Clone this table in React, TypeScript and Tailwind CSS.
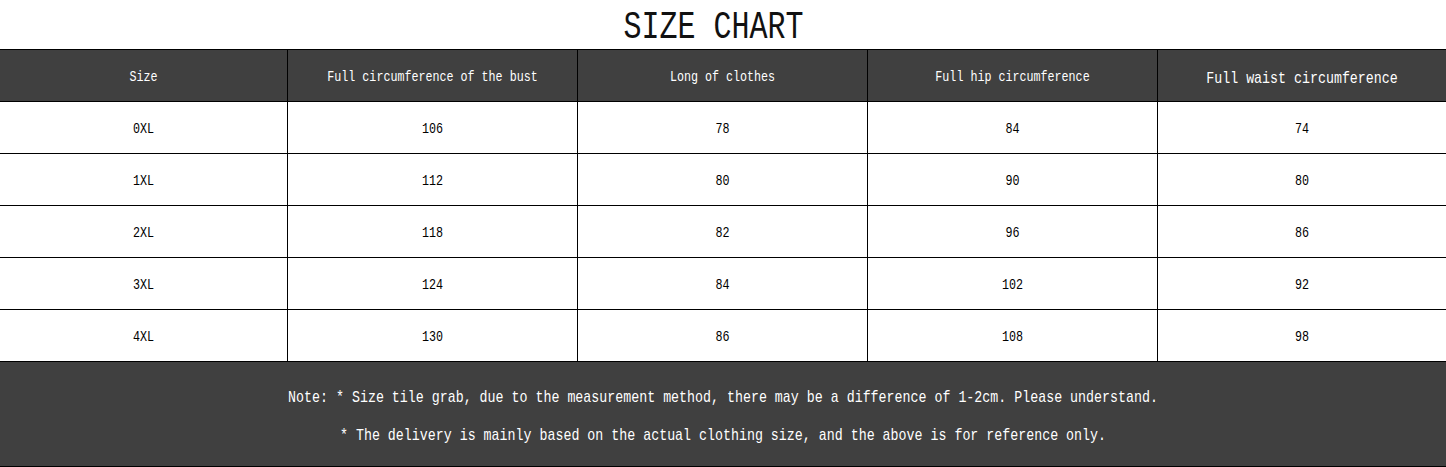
import React from "react";

const headers = [
  { t: "Size", cls: "text-[11.7px]" },
  { t: "Full circumference of the bust", cls: "text-[11.7px]" },
  { t: "Long of clothes", cls: "text-[11.7px]" },
  { t: "Full hip circumference", cls: "text-[11.7px]" },
  { t: "Full waist circumference", cls: "text-[13.3px]" },
];

const rows = [
  ["0XL", "106", "78", "84", "74"],
  ["1XL", "112", "80", "90", "80"],
  ["2XL", "118", "82", "96", "86"],
  ["3XL", "124", "84", "102", "92"],
  ["4XL", "130", "86", "108", "98"],
];

const cols = "grid grid-cols-[287px_290px_290px_290px_289px]";

export default function App() {
  return (
    <div className="w-[1446px] h-[467px] bg-white overflow-hidden" style={{ fontFamily: '"Liberation Mono", monospace' }}>
      <div className="h-[49px] flex items-center justify-center text-[30px] text-[#111] pt-[8px] pr-[19px]">
        <span className="inline-block scale-y-[1.3]">SIZE CHART</span>
      </div>
      <div className="border-t border-black">
        <div className={`${cols} h-[52px] bg-[#404040] text-white border-b border-black`}>
          {headers.map((h, i) => (
            <div key={i} className={`flex items-center justify-center pt-[7px] ${h.cls} ${i > 0 ? "border-l border-black" : ""}`}>
              <span className="inline-block scale-y-[1.2]">{h.t}</span>
            </div>
          ))}
        </div>
        {rows.map((r, ri) => (
          <div key={ri} className={`${cols} h-[52px] text-black text-[11.7px] border-b border-black`}>
            {r.map((c, ci) => (
              <div key={ci} className={`flex items-center justify-center pt-[5px] ${ci > 0 ? "border-l border-black" : ""}`}>
                <span className="inline-block scale-y-[1.25]">{c}</span>
              </div>
            ))}
          </div>
        ))}
        <div className="h-[105px] bg-[#404040] text-white text-[13.3px] border-b border-black flex flex-col items-center pt-[28px] gap-[22px]">
          <div className="leading-[16px] scale-y-[1.2]">Note: * Size tile grab, due to the measurement method, there may be a difference of 1-2cm. Please understand.</div>
          <div className="leading-[16px] scale-y-[1.2]">* The delivery is mainly based on the actual clothing size, and the above is for reference only.</div>
        </div>
      </div>
    </div>
  );
}
